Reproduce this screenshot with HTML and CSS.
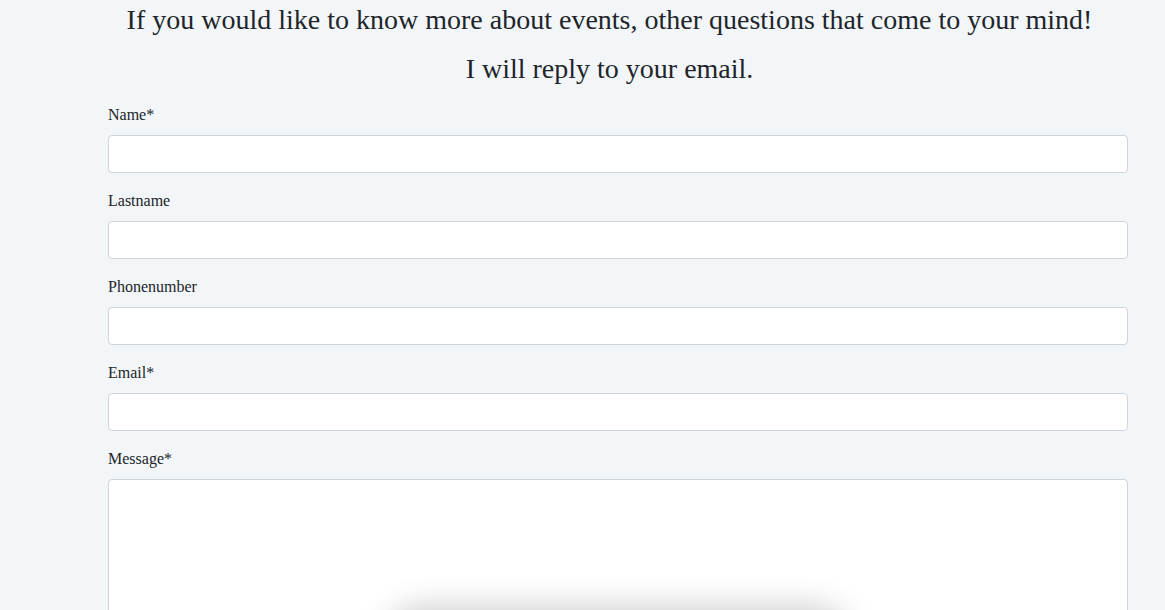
FILE: index.html
```html
<!DOCTYPE html>
<html>
<head>
<meta charset="utf-8">
<link rel="stylesheet" href="styles.css">
</head>
<body>
<div class="page">
  <div class="intro">
    <p class="intro-line">If you would like to know more about events, other questions that come to your mind!</p>
    <p class="intro-line">I will reply to your email.</p>
  </div>
  <form class="contact-form">
    <div class="field">
      <label class="field-label">Name*</label>
      <input class="field-input" type="text">
    </div>
    <div class="field">
      <label class="field-label">Lastname</label>
      <input class="field-input" type="text">
    </div>
    <div class="field">
      <label class="field-label">Phonenumber</label>
      <input class="field-input" type="text">
    </div>
    <div class="field">
      <label class="field-label">Email*</label>
      <input class="field-input" type="text">
    </div>
    <div class="field">
      <label class="field-label">Message*</label>
      <textarea class="field-input field-textarea"></textarea>
    </div>
  </form>
</div>
<div class="floating-bar"></div>
</body>
</html>
```

FILE: styles.css
```css
html, body {
  margin: 0;
  padding: 0;
  background: #f3f6f9;
  color: #212529;
  font-family: "Liberation Serif", "Times New Roman", serif;
  overflow: hidden;
}

.page {
  width: 1165px;
  height: 610px;
  overflow: hidden;
}

.intro {
  margin-top: -5px;
  padding-left: 54px;
  text-align: center;
}

.intro-line {
  margin: 0;
  font-size: 28px;
  line-height: 49px;
}

.contact-form {
  margin: 10px 37px 0 108px;
  display: flex;
  flex-direction: column;
  gap: 16px;
}

.field {
  display: flex;
  flex-direction: column;
  gap: 8px;
}

.field-label {
  font-size: 16px;
  line-height: 24px;
}

.field-input {
  box-sizing: border-box;
  width: 1020px;
  height: 38px;
  margin: 0;
  border: 1px solid #ced4da;
  border-radius: 4px;
  background: #fff;
  font: inherit;
  outline: none;
}

.field-textarea {
  height: 200px;
  resize: none;
}

.floating-bar {
  position: fixed;
  left: 395px;
  width: 445px;
  bottom: -55px;
  height: 50px;
  border-radius: 25px;
  background: #fff;
  box-shadow: 0 0 32px 8px rgba(0, 0, 0, 0.2);
}
```
